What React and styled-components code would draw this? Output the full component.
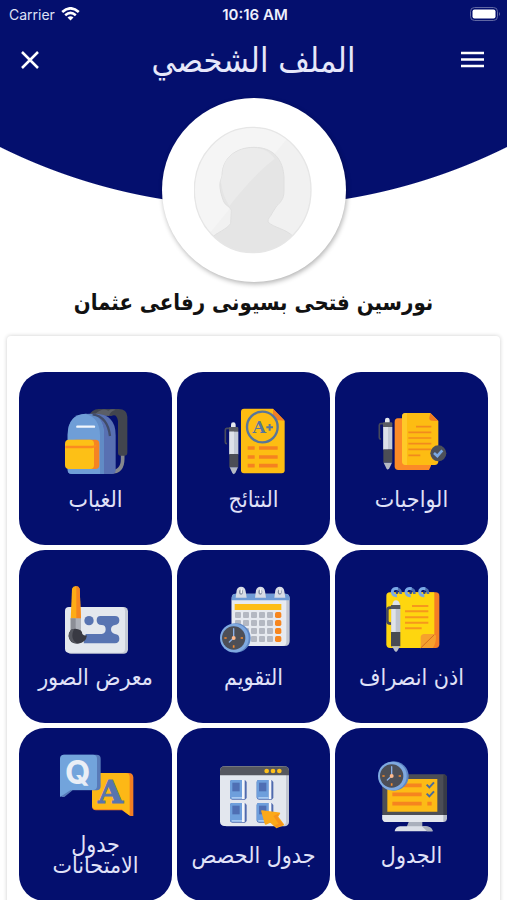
import React from 'react';
import styled, { createGlobalStyle } from 'styled-components';

const GlobalStyle = createGlobalStyle`
  * {
    box-sizing: border-box;
  }
  body {
    margin: 0;
    background: #fff;
    font-family: "DejaVu Sans Condensed", "DejaVu Sans", "Noto Sans", sans-serif;
  }
`;

const Page = styled.div`
  height: 100vh;
  overflow-y: auto;
  scrollbar-width: none;
`;

const Header = styled.header`
  background: radial-gradient(circle at 50% -363px, #040f6e 569px, transparent 570px);
`;

const StatusBar = styled.div`
  display: grid;
  grid-template-columns: 1fr auto 1fr;
  align-items: center;
  height: 28px;
  padding: 0 6px 0 9px;
  color: #fff;
  font-family: Inter, "Liberation Sans", sans-serif;
  font-size: 14px;
`;

const Carrier = styled.div`
  display: flex;
  align-items: center;
  gap: 6px;
  color: #dfe1f5;
`;

const Clock = styled.time`
  color: #eeeffc;
  font-size: 15px;
  font-weight: 600;
`;

const Battery = styled.div`
  display: flex;
  justify-content: flex-end;
`;

const TitleBar = styled.div`
  display: grid;
  grid-template-columns: 1fr auto 1fr;
  align-items: center;
  height: 64px;
  padding: 0 20px;
`;

const Title = styled.h1`
  margin: 0;
  color: #e6e7fa;
  font-size: 34px;
  font-weight: 400;
  line-height: 48px;
`;

const IconButton = styled.button`
  display: flex;
  justify-self: ${props => props.$side};
  padding: 0;
  border: 0;
  background: none;
  color: #fff;
  cursor: pointer;
`;

const Avatar = styled.div`
  display: flex;
  align-items: center;
  justify-content: center;
  width: 184px;
  height: 184px;
  margin: 6px auto 0;
  border-radius: 50%;
  background: #fff;
  box-shadow: 1px 2px 5px rgba(0, 0, 0, 0.3);
`;

const Name = styled.h2`
  margin: 5px 0 0;
  padding: 0 8px;
  color: #111;
  font-size: 22px;
  font-weight: 700;
  line-height: 32px;
  text-align: center;
`;

const Panel = styled.main`
  margin: 17px 7px 0;
  padding: 36px 12px;
  border-radius: 4px;
  background: #fff;
  box-shadow: 0 0 4px rgba(0, 0, 0, 0.2);
`;

const Grid = styled.nav`
  display: grid;
  grid-template-columns: repeat(3, 1fr);
  gap: 5px;
`;

const Tile = styled.a`
  display: flex;
  flex-direction: column;
  align-items: center;
  justify-content: center;
  gap: 12px;
  min-height: 173px;
  padding-bottom: 3px;
  border-radius: 26px;
  background: #040f6e;
  color: #e0e2f8;
  text-decoration: none;
`;

const Label = styled.span`
  max-width: 132px;
  font-size: 23px;
  line-height: 21px;
  text-align: center;
`;

const TileSvg = styled.svg`
  width: 72px;
  height: 72px;
  overflow: visible;
`;

const Pen = ({ x, y }) => (
  <g transform={`translate(${x} ${y})`}>
    <path d="M6 18H-7q-4 0-4 5v37q0 4 5 4" fill="none" stroke="#474a5c" strokeWidth="5" />
    <rect x="6" y="0" width="14" height="22" rx="7" fill="#e6e9ee" />
    <rect x="0" y="14" width="28" height="16" rx="3" fill="#5a5c63" />
    <path d="M1 28h27v68H1z" fill="#c5cbd6" />
    <path d="M1 28h14v68H1z" fill="#dde1e9" />
    <path d="M1 95h27v40H1z" fill="#4b4d55" />
    <path d="M2 135h25l-8 17-5 4-4-4z" fill="#b5bac4" />
  </g>
);

const ClockFace = ({ cx, cy }) => (
  <g transform={`translate(${cx} ${cy})`}>
    <circle cx="4" r="44" fill="#5e86c4" />
    <circle cx="-1" r="43" fill="#7fa9e0" />
    <circle cx="-3" r="35" fill="#4d4f57" />
    <path d="M-3-28V0l-13 12" fill="none" stroke="#8bb0e6" strokeWidth="4" strokeLinecap="round" />
    <circle cx="-3" r="6" fill="#ffb98c" />
    <path d="M-31 0h7M18 0h7M-3 22v7" stroke="#f58a2c" strokeWidth="5" />
  </g>
);

const HomeworkIcon = () => (
  <TileSvg viewBox="17 30 216 216">
    <Pen x="38" y="68" />
    <path d="M82 70h100v142l-6 13H84q-11 0-11-11V81q0-11 9-11z" fill="#fb8a27" />
    <path d="M107 54h73l24 24v121q0 11-11 11h-86q-11 0-11-9V64q0-10 11-10z" fill="#fdbc12" />
    <path d="M95 64q0-10 11-10h4v156h-6q-9-1-9-11z" fill="#ffc928" />
    <path d="M180 54l24 24-19-1q-9-1-8-9z" fill="#f07b22" />
    <path d="M137 95h46M114 112h69M114 129h69M114 146h69M114 163h69M114 181h36" stroke="#f28a1d" strokeWidth="5" />
    <circle cx="204" cy="175" r="24" fill="#4d5059" />
    <path d="M191 174l10 9 15-17" fill="none" stroke="#7aa8e4" strokeWidth="8" />
  </TileSvg>
);

const ResultsIcon = () => (
  <TileSvg viewBox="8 30 216 216">
    <Pen x="41" y="82" />
    <path d="M86 41h87l35 36v149q0 9-9 9H86q-9 0-9-9V50q0-9 9-9z" fill="#fdbd12" />
    <path d="M173 41l35 36-25-2q-10-1-10-11z" fill="#f27d25" />
    <circle cx="141" cy="96" r="46" fill="#fdbd12" stroke="#58769b" strokeWidth="7" />
    <text x="132" y="115" textAnchor="middle" fontFamily="DejaVu Serif" fontWeight="700" fontSize="52" fill="#58769b">A</text>
    <path d="M153 97h20M163 87v20" stroke="#58769b" strokeWidth="6" />
    <path d="M97 159h21M131 159h56M97 186h21M131 186h56M97 212h21M131 212h56" stroke="#f58220" strokeWidth="11" />
  </TileSvg>
);

const BackpackIcon = () => (
  <TileSvg viewBox="14 15 216 216">
    <path d="M202 160v17q0 39-35 39" fill="none" stroke="#85878d" strokeWidth="11" />
    <path d="M101 48q7-20 29-21h60q25 0 26 23v108q0 9-9 9h-11q-8 0-8-9V63q-4-24-20-15z" fill="#42454e" />
    <path d="M120 42q21-21 39-10 9-6 22-3-16 4-20 18z" fill="#5b5e66" />
    <path d="M37 105q0-64 65-64h20q59 2 59 64v105q0 12-12 12H49q-12 0-12-12z" fill="#5870b2" />
    <path d="M37 105q0-62 54-64 55 2 55 64v117H49q-12 0-12-12z" fill="#6f9ed7" />
    <path d="M103 42q43 4 43 64v116h-12V106q0-52-43-64z" fill="#618bc5" />
    <path d="M112 43q45 7 52 65" fill="none" stroke="#414c68" strokeWidth="7" />
    <path d="M66 80h50" stroke="#f2f6fc" strokeWidth="7" strokeLinecap="round" />
    <rect x="50" y="119" width="82" height="88" rx="12" fill="#f58423" />
    <rect x="29" y="119" width="87" height="88" rx="12" fill="#fdc016" />
    <path d="M30 141h80q7 0 12-6" fill="none" stroke="#fb8a20" strokeWidth="7" />
  </TileSvg>
);

const LeaveIcon = () => (
  <TileSvg viewBox="17 24 216 216">
    <rect x="65" y="52" width="142" height="167" rx="11" fill="#f47e25" />
    <path d="M59 52h133v127l-41 40H59q-11 0-11-11V63q0-11 11-11z" fill="#fed60f" />
    <path d="M151 219v-31q0-11 11-11h30l5 5q0 25-10 37z" fill="#f6a12d" />
    <path d="M192 179l-41 40" stroke="#d56c1e" strokeWidth="3" />
    {[76, 117, 158].map(cx => (
      <g key={cx}>
        <path d={`M${cx + 2} 41q14 2 13 16`} fill="none" stroke="#4e6fae" strokeWidth="8" />
        <path d={`M${cx + 7} 41q-17-3-17 10 1 12 14 11`} fill="none" stroke="#7aa9e6" strokeWidth="9" />
        <circle cx={cx + 4} cy="53" r="4" fill="#27408e" />
      </g>
    ))}
    <path d="M125 93h49M104 109h70M104 127h70M104 143h70M104 160h50" stroke="#f6981c" strokeWidth="6" />
    <path d="M72 98H60q-9 0-9 8v32q0 8 11 8" fill="none" stroke="#46495a" strokeWidth="8" />
    <path d="M66 90q1-14 11-14t12 14z" fill="#dfe3ea" />
    <path d="M63 95h27v78H63z" fill="#bfc4ce" />
    <path d="M63 95h13v78H63z" fill="#dfe3ea" />
    <path d="M62 90h28v12H62z" fill="#53565f" />
    <path d="M62 171h28v43H62z" fill="#484b53" />
    <path d="M65 214h24l-8 14-4 3-4-3z" fill="#b9bec7" />
  </TileSvg>
);

const CalendarIcon = () => (
  <TileSvg viewBox="22 24 216 216">
    <path d="M76 56h147q13 0 14 13v129q0 15-14 15H76q-13 0-13-15V69q0-13 13-13z" fill="#c2c7d1" />
    <path d="M63 74h164v127q0 12-12 12H76q-13 0-13-15z" fill="#e7eaf0" />
    <path d="M76 56h147q13 0 14 13v7H63v-7q0-13 13-13z" fill="#6f9bd6" />
    {[91, 149, 207].map(cx => (
      <g key={cx}>
        <path d={`M${cx - 16} 68l3-22q3-11 13-11 13 0 14 14l3 19z`} fill="#d8dce5" />
        <ellipse cx={cx} cy="51" rx="6" ry="8" fill="#7d879c" />
        <path d={`M${cx + 1} 41v14`} stroke="#f4f5f8" strokeWidth="5" />
      </g>
    ))}
    <path d="M72 87h140v18H72z" fill="#fdbd16" />
    {[120, 144, 168, 192].map(y =>
      [82, 106, 130, 154, 178].map(x => (
        <rect key={`${x}-${y}`} x={x - 9} y={y - 9} width="18" height="18" rx="3" fill="#b4b8c2" />
      ))
    )}
    {[120, 144, 168, 192].map(y => (
      <rect key={y} x="193" y={y - 9} width="19" height="18" rx="5" fill="#f7861f" />
    ))}
    <ClockFace cx="72" cy="189" />
  </TileSvg>
);

const GalleryIcon = () => (
  <TileSvg viewBox="28 24 216 216">
    <rect x="48" y="96" width="184" height="140" rx="13" fill="#c7ccd5" />
    <rect x="43" y="96" width="180" height="137" rx="12" fill="#e4e8ee" />
    <circle cx="115" cy="137" r="14" fill="#5874b2" />
    <path d="M151 123h42q13 0 13 13t-13 14q-12 2-12 13t12 14q13 1 13 14t-13 14h-94l6-28h48q12-1 12-14t-12-13q-15 0-15-14t13-13z" fill="#5874b2" />
    <path d="M60 134l4-93q3-8 11-8t12 8l4 93z" fill="#fdac16" />
    <path d="M77 33q8 0 10 8l4 93H77z" fill="#f5861f" />
    <path d="M60 130h31v33l-7 11H65l-5-11z" fill="#aeb1b9" />
    <path d="M60 130h15v40H60z" fill="#8c8e96" />
    <path d="M61 164q15-7 29 2 5 5 5 11 6 6 14 4-3 23-27 25-27 0-28-23 0-12 7-19z" fill="#393a43" />
    <path d="M61 164q-13 19-2 32 9 10 23 10-17-7-17-23 0-10 5-21-5 0-9 2z" fill="#55575f" />
  </TileSvg>
);

const ScheduleIcon = () => (
  <TileSvg viewBox="17 33 216 216">
    <path d="M48 73h170q11 0 12 11v115H36V85q0-12 12-12z" fill="#4c4e56" />
    <path d="M220 73q9 1 10 11v115h-11V80z" fill="#383b47" />
    <path d="M51 87h150v98H51z" fill="#fdbb16" />
    <path d="M66 106h88M66 133h88M66 161h88M171 161h13" stroke="#f6841f" strokeWidth="11" />
    <path d="M169 104l8 8 14-15M169 131l8 8 14-15" fill="none" stroke="#4a6b9c" strokeWidth="6" />
    <path d="M36 195h194v10q0 11-11 11H47q-11 0-11-11z" fill="#b8bdc8" />
    <path d="M36 195h183v21H47q-11 0-11-11z" fill="#e4e7ed" />
    <path d="M115 216h41v15h-47z" fill="#aab0bc" />
    <path d="M89 229h77q19 1 21 15H73q2-14 16-15z" fill="#dbdfe7" />
    <path d="M155 229h11q19 1 21 15h-17z" fill="#aab0bc" />
    <ClockFace cx="67" cy="78" />
  </TileSvg>
);

const ClassesIcon = () => (
  <TileSvg viewBox="22 48 216 216">
    <rect x="35" y="64" width="200" height="180" rx="13" fill="#c2c7d2" />
    <rect x="28" y="64" width="198" height="179" rx="13" fill="#e3e7ee" />
    <path d="M41 64h180q14 0 14 14v13H28V78q0-14 13-14z" fill="#55575f" />
    {[168, 187, 206].map(cx => (
      <circle key={cx} cx={cx} cy="78" r="7" fill="#fdbf1a" />
    ))}
    {[[58, 105], [138, 105], [58, 174], [138, 174]].map(([x, y]) => (
      <g key={`${x}-${y}`} transform={`translate(${x} ${y})`}>
        <path d="M6 0h39l5 6v48l-5 5H7q-7 0-7-7V6q0-6 6-6z" fill="#506bae" />
        <path d="M35 0h9v57h-9z" fill="#f4f6fa" />
        <path d="M6 0h30v57H6q-6-1-6-7V6q0-6 6-6z" fill="#6e9fdc" />
        <path d="M5 51h31v5H5z" fill="#a9c9f0" />
        <path d="M7 8h22v26H7z" fill="#4f6fb4" />
      </g>
    ))}
    <path d="M154 198L206 205L200 215L218 239L198 247L179 230L165 237Z" fill="#fba919" stroke="#fba919" strokeWidth="5" strokeLinejoin="round" />
    <path d="M206 205L200 215L218 239L198 247L192 241L204 236L188 213Z" fill="#f6931c" />
  </TileSvg>
);

const ExamsIcon = () => (
  <TileSvg viewBox="28 18 216 216">
    <path d="M135 87h99q13 0 14 13v116h-9l-25-17h-78q-12 0-12-12V99q0-12 11-12z" fill="#f47e22" />
    <path d="M135 87h90q12 0 12 12v116l-24-19h-77q-12 0-12-12V99q0-12 11-12z" fill="#fdb816" />
    <path d="M38 32h100q12 0 12 12v82q0 13-12 13H66l-25 20h-9z" fill="#587bb9" />
    <path d="M40 32h87q12 0 12 12v82q0 12-12 12H60l-32 21V44q0-12 12-12z" fill="#72a4dc" />
    <text x="81" y="121" textAnchor="middle" fontFamily="Inter" fontWeight="700" fontSize="98" fill="#e9eef6">Q</text>
    <text x="180" y="176" textAnchor="middle" fontFamily="DejaVu Serif" fontWeight="700" fontSize="97" fill="#5874ae" stroke="#5874ae" strokeWidth="3">A</text>
  </TileSvg>
);

const tiles = [
  { label: 'الواجبات', Icon: HomeworkIcon },
  { label: 'النتائج', Icon: ResultsIcon },
  { label: 'الغياب', Icon: BackpackIcon },
  { label: 'اذن انصراف', Icon: LeaveIcon },
  { label: 'التقويم', Icon: CalendarIcon },
  { label: 'معرض الصور', Icon: GalleryIcon },
  { label: 'الجدول', Icon: ScheduleIcon },
  { label: 'جدول الحصص', Icon: ClassesIcon },
  { label: 'جدول الامتحانات', Icon: ExamsIcon },
];

const App = () => {
  return (
    <Page>
      <GlobalStyle />
      <Header>
        <StatusBar>
          <Carrier>
            Carrier
            <svg width="19" height="14" viewBox="0 0 19 14" fill="none" stroke="#fff" strokeWidth="2.6">
              <path d="M1.2 5Q9.5-2.4 17.8 5" />
              <path d="M4.2 8.2Q9.5 3.6 14.8 8.2" />
              <path d="M9.5 13.5L6.5 10.5Q9.5 8 12.5 10.5z" fill="#fff" stroke="none" />
            </svg>
          </Carrier>
          <Clock>10:16 AM</Clock>
          <Battery>
            <svg width="31" height="14" viewBox="0 0 31 14">
              <rect x="0.5" y="0.5" width="27" height="13" rx="4" fill="none" stroke="#6067a3" />
              <rect x="2.5" y="2.5" width="23" height="9" rx="2" fill="#fff" />
              <path d="M29 5q2 2 0 4z" fill="#6067a3" />
            </svg>
          </Battery>
        </StatusBar>
        <TitleBar>
          <IconButton $side="start" aria-label="إغلاق">
            <svg width="20" height="20" viewBox="0 0 20 20" fill="none" stroke="currentColor" strokeWidth="2.5">
              <path d="M2 2l16 16M18 2L2 18" />
            </svg>
          </IconButton>
          <Title dir="rtl">الملف الشخصي</Title>
          <IconButton $side="end" aria-label="القائمة">
            <svg width="28" height="20" viewBox="0 0 28 20" stroke="currentColor" strokeWidth="2.5">
              <path d="M2 3h23M2 9.5h23M2 16h23" />
            </svg>
          </IconButton>
        </TitleBar>
        <Avatar>
          <svg width="120" height="128" viewBox="0 0 360 384">
            <defs>
              <clipPath id="face">
                <ellipse cx="176" cy="192" rx="175" ry="188" />
              </clipPath>
            </defs>
            <g clipPath="url(#face)">
              <path d="M0 0h360v384H0z" fill="#f1f1f1" />
              <path d="M0 0h310L40 330H0z" fill="#f5f5f5" />
              <path
                d="M180 64c58 0 88 36 90 92v40c0 24-12 34-22 44l-14 22c-2 8-14 14-12 26 18 18 54 20 76 44v60H50v-54c16-18 50-28 60-46l2-40c-8-14-20-14-24-28-6-16-12-36-10-54l6-20c0-54 42-86 96-86z"
                fill="#e5e5e5"
                stroke="#dfdfdf"
                strokeWidth="3"
              />
              <path d="M180 66c26 0 48 12 62 32C194 134 150 186 106 240c-8-14-16-30-20-46l-6-30 6-20c0-52 44-78 94-78z" fill="#ebebeb" />
            </g>
            <ellipse cx="176" cy="192" rx="175" ry="188" fill="none" stroke="#e6e6e6" strokeWidth="4" />
          </svg>
        </Avatar>
      </Header>
      <Name dir="rtl">نورسين فتحى بسيونى رفاعى عثمان</Name>
      <Panel>
        <Grid dir="rtl">
          {tiles.map(({ label, Icon }) => (
            <Tile href="#" key={label}>
              <Icon />
              <Label>{label}</Label>
            </Tile>
          ))}
        </Grid>
      </Panel>
    </Page>
  );
};

export default App;
